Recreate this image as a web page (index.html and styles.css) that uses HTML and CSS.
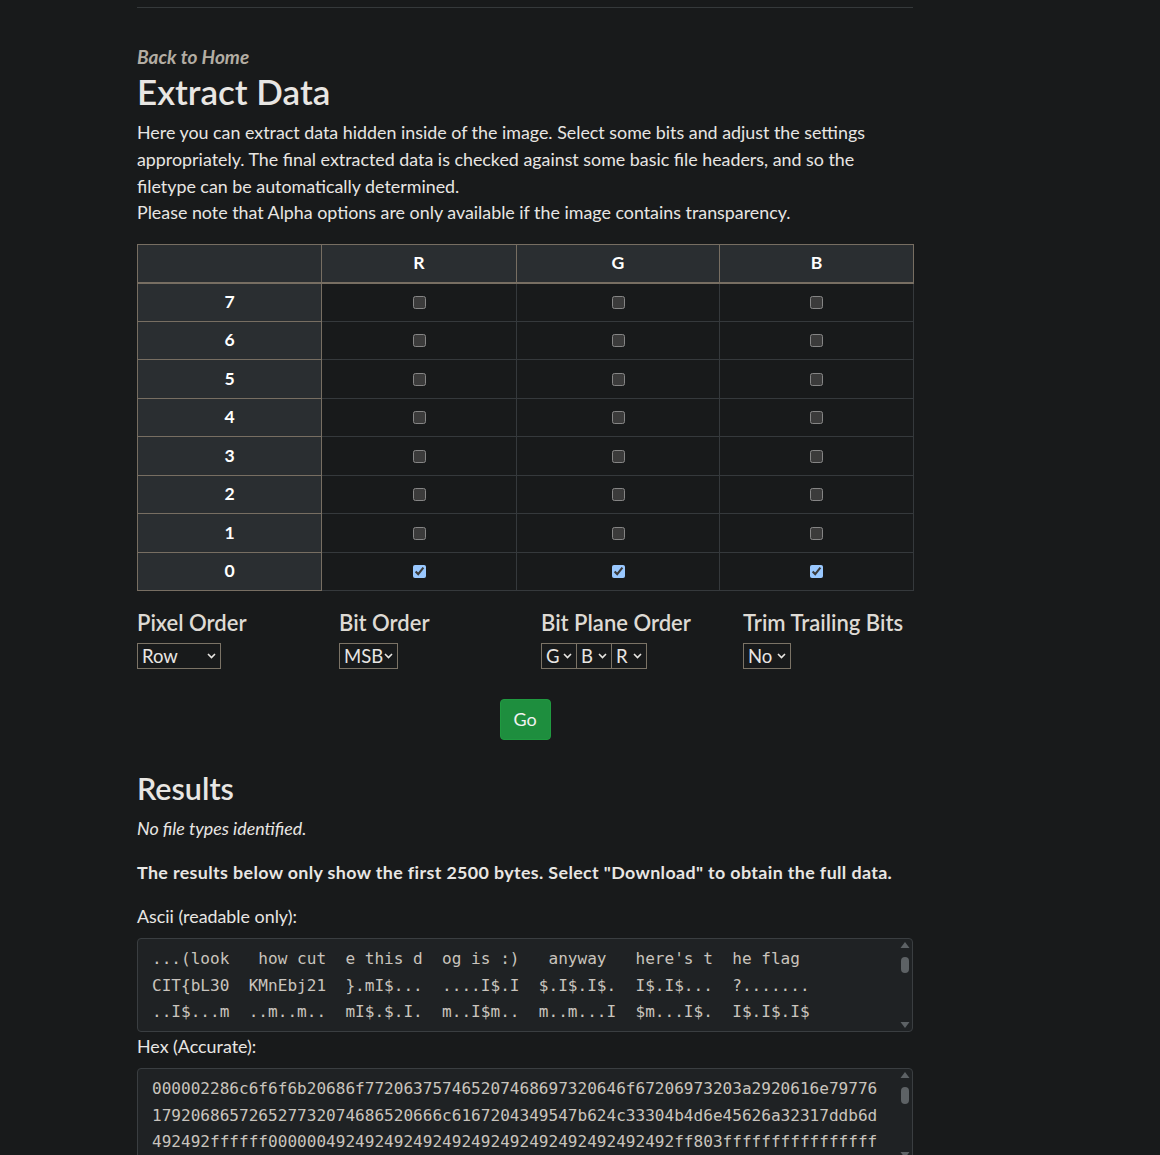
FILE: index.html
```html
<!DOCTYPE html>
<html lang="en">
<head>
<meta charset="utf-8">
<title>Extract Data</title>
<link rel="stylesheet" href="styles.css">
</head>
<body>
<main class="page">
  <hr class="rule">
  <a class="back" href="#">Back to Home</a>
  <h1 class="title">Extract Data</h1>
  <p class="intro">Here you can extract data hidden inside of the image. Select some bits and adjust the settings appropriately. The final extracted data is checked against some basic file headers, and so the filetype can be automatically determined.<br>Please note that Alpha options are only available if the image contains transparency.</p>

  <table class="bits">
    <colgroup><col class="c0"><col class="c1"><col class="c2"><col class="c3"></colgroup>
    <thead>
      <tr><th></th><th>R</th><th>G</th><th>B</th></tr>
    </thead>
    <tbody>
      <tr><th>7</th><td><input type="checkbox"></td><td><input type="checkbox"></td><td><input type="checkbox"></td></tr>
      <tr><th>6</th><td><input type="checkbox"></td><td><input type="checkbox"></td><td><input type="checkbox"></td></tr>
      <tr><th>5</th><td><input type="checkbox"></td><td><input type="checkbox"></td><td><input type="checkbox"></td></tr>
      <tr><th>4</th><td><input type="checkbox"></td><td><input type="checkbox"></td><td><input type="checkbox"></td></tr>
      <tr><th>3</th><td><input type="checkbox"></td><td><input type="checkbox"></td><td><input type="checkbox"></td></tr>
      <tr><th>2</th><td><input type="checkbox"></td><td><input type="checkbox"></td><td><input type="checkbox"></td></tr>
      <tr><th>1</th><td><input type="checkbox"></td><td><input type="checkbox"></td><td><input type="checkbox"></td></tr>
      <tr><th>0</th><td><input type="checkbox" checked></td><td><input type="checkbox" checked></td><td><input type="checkbox" checked></td></tr>
    </tbody>
  </table>

  <div class="options">
    <div class="opt">
      <h5 class="opt-label">Pixel Order</h5>
      <select class="sel sel-row"><option>Row</option><option>Column</option></select>
    </div>
    <div class="opt">
      <h5 class="opt-label">Bit Order</h5>
      <select class="sel sel-msb"><option>MSB</option><option>LSB</option></select>
    </div>
    <div class="opt">
      <h5 class="opt-label">Bit Plane Order</h5>
      <div class="planes">
        <select class="sel sel-plane"><option>G</option><option>R</option><option>B</option></select>
        <select class="sel sel-plane"><option>B</option><option>R</option><option>G</option></select>
        <select class="sel sel-plane"><option>R</option><option>G</option><option>B</option></select>
      </div>
    </div>
    <div class="opt">
      <h5 class="opt-label">Trim Trailing Bits</h5>
      <select class="sel sel-no"><option>No</option><option>Yes</option></select>
    </div>
  </div>

  <div class="go-wrap"><button class="go" type="button">Go</button></div>

  <h2 class="results">Results</h2>
  <p class="none">No file types identified.</p>
  <p class="notice">The results below only show the first 2500 bytes. Select "Download" to obtain the full data.</p>
  <p class="label">Ascii (readable only):</p>
  <div class="out-wrap">
<pre class="output">...(look   how cut  e this d  og is :)   anyway   here's t  he flag 
CIT{bL30  KMnEbj21  }.mI$...  ....I$.I  $.I$.I$.  I$.I$...  ?.......
..I$...m  ..m..m..  mI$.$.I.  m..I$m..  m..m...I  $m...I$.  I$.I$.I$
.m..m..I  $..I$..m  ..m..I$.  I$..m..m  ..I$.I$.  m..m..I$  .I$..m..</pre>
    <svg class="scroll" width="10" height="88" viewBox="0 0 10 88" aria-hidden="true"><path d="M5 1L9.5 7H0.5z" fill="#5d6265"/><rect x="1" y="16" width="8" height="16" rx="4" fill="#5d6265"/><path d="M0.5 81H9.5L5 87z" fill="#5d6265"/></svg>
  </div>
  <p class="label hex-label">Hex (Accurate):</p>
  <div class="out-wrap hex-wrap">
<pre class="output">000002286c6f6f6b20686f772063757465207468697320646f67206973203a2920616e79776
179206865726527732074686520666c6167204349547b624c33304b4d6e45626a32317ddb6d
492492ffffff000000492492492492492492492492492492492492ff803ffffffffffffffff
ff6db6db6db6db6db6924924924924924924924924924924924924924924924924924924924</pre>
    <svg class="scroll" width="10" height="88" viewBox="0 0 10 88" aria-hidden="true"><path d="M5 1L9.5 7H0.5z" fill="#5d6265"/><rect x="1" y="16" width="8" height="17" rx="4" fill="#5d6265"/><path d="M0.5 81H9.5L5 87z" fill="#5d6265"/></svg>
  </div>
</main>
</body>
</html>
```
FILE: styles.css
```css
html {
  overflow: hidden;
}

body {
  margin: 0;
  background: #181a1b;
  color: #e8e6e3;
  font-family: Lato, "Noto Sans", sans-serif;
  font-size: 17.85px;
  line-height: 26.6px;
}

.page {
  width: 776px;
  margin-left: 137px;
  padding-top: 7px;
}

.rule {
  border: 0;
  border-top: 1px solid #35393b;
  margin: 0;
}

.back {
  display: block;
  margin-top: 36px;
  font-size: 19px;
  font-style: italic;
  font-weight: 700;
  color: #b3ada3;
  text-decoration: none;
  line-height: 26.4px;
}

.title {
  margin: 0;
  font-size: 35px;
  font-weight: 600;
  line-height: 42px;
}

.intro {
  margin: 7px 0 0;
}

.bits {
  margin-top: 18px;
  width: 776px;
  border-collapse: collapse;
  table-layout: fixed;
  font-size: 17.6px;
}

.c0 { width: 184px; }
.c1 { width: 195px; }
.c2 { width: 203px; }
.c3 { width: 194px; }

.bits th {
  background: #2a2e31;
  border: 1px solid #776e62;
  color: #ffffff;
  font-weight: 700;
  text-align: center;
  padding: 0;
}

.bits thead th {
  height: 37px;
  border-bottom: 2px solid #776e62;
}

.bits tbody tr {
  height: 38.5px;
}

.bits td {
  border: 1px solid #35393c;
  text-align: center;
  padding: 0;
  line-height: 0;
}

.bits input {
  color-scheme: dark;
  margin: 0;
  width: 13px;
  height: 13px;
  vertical-align: middle;
}

.options {
  display: grid;
  grid-template-columns: 202px 202px 202px auto;
  margin-top: 19px;
}

.opt-label {
  margin: 0 0 6px;
  font-size: 22px;
  font-weight: 600;
  line-height: 26.4px;
  color: #dedad4;
}

.sel {
  appearance: none;
  -webkit-appearance: none;
  display: block;
  height: 26px;
  margin: 0;
  padding: 0 0 0 4px;
  border: 1px solid #7b7366;
  border-radius: 0;
  background: #181a1b url("data:image/svg+xml;utf8,<svg xmlns='http://www.w3.org/2000/svg' width='9' height='6' viewBox='0 0 9 6'><path d='M1 1l3.5 3.5L8 1' fill='none' stroke='%23e8e6e3' stroke-width='1.6'/></svg>") no-repeat right 4px center;
  color: #e8e6e3;
  font-family: inherit;
  font-size: 18.5px;
  line-height: 24px;
}

.sel-row { width: 84px; }
.sel-msb { width: 59px; }
.sel-no { width: 48px; }

.planes {
  display: flex;
}

.sel-plane {
  width: 36px;
}

.sel-plane + .sel-plane {
  margin-left: -1px;
}

.go-wrap {
  display: flex;
  justify-content: center;
  margin-top: 30px;
}

.go {
  width: 51px;
  height: 41px;
  padding: 0;
  border: 1px solid #1f9a40;
  border-radius: 4px;
  background: #1e8e3e;
  color: #f2f2f2;
  font-family: inherit;
  font-size: 18px;
}

.results {
  margin: 31px 0 0;
  font-size: 30.5px;
  font-weight: 600;
  line-height: 35px;
}

.none {
  margin: 9px 0 0;
  font-style: italic;
  line-height: 26.4px;
}

.notice {
  margin: 18px 0 0;
  font-weight: 700;
  letter-spacing: 0.37px;
  line-height: 26.4px;
}

.label {
  margin: 17px 0 0;
  line-height: 26.4px;
}

.hex-label {
  margin-top: 1.5px;
}

.out-wrap {
  position: relative;
  margin-top: 9px;
}

.hex-wrap {
  margin-top: 8px;
}

.output {
  box-sizing: border-box;
  height: 94px;
  margin: 0;
  padding: 7.5px 14px 7px;
  overflow: hidden;
  background: #1f2224;
  border: 1px solid #3a3e41;
  border-radius: 4px;
  color: #c9c4bd;
  font-family: "DejaVu Sans Mono", monospace;
  font-size: 16.07px;
  line-height: 26.4px;
  white-space: pre;
}

.scroll {
  position: absolute;
  top: 3px;
  right: 3px;
  display: block;
}
```
